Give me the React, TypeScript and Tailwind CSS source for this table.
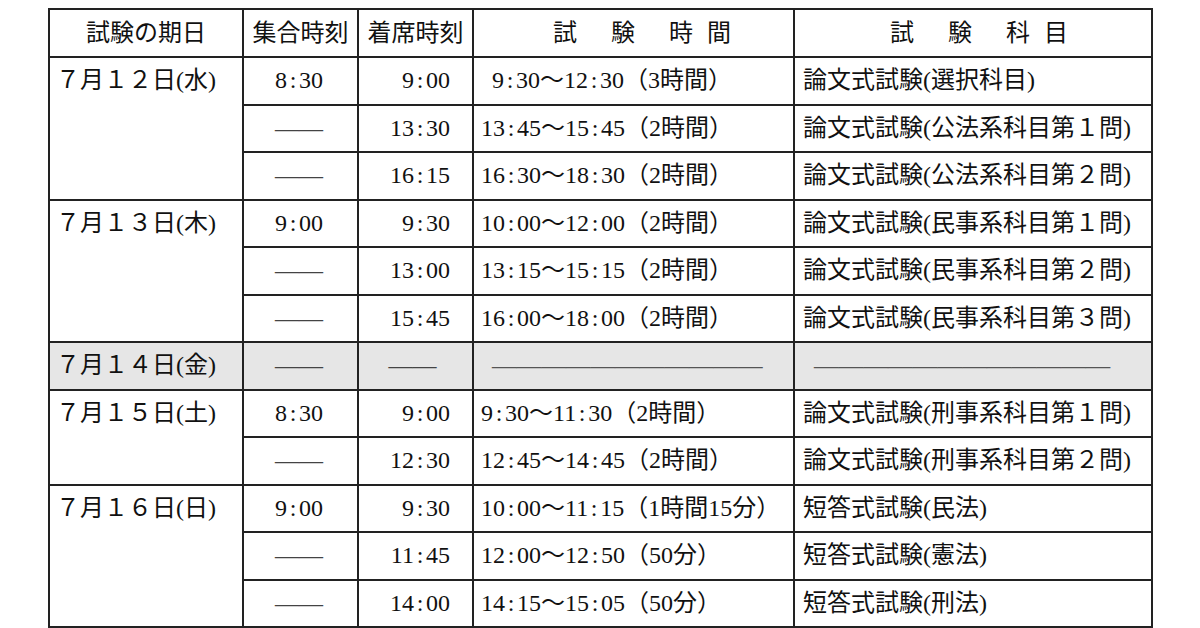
import React from "react";

type Row = {
  gather: string;
  seat: string;
  time: string;
  subject: string;
  indent?: boolean;
};

type Group = { date: string; rows: Row[]; gray?: boolean };

const groups: Group[] = [
  {
    date: "７月１２日(水)",
    rows: [
      { gather: "8:30", seat: "9:00", time: "9:30～12:30（3時間）", subject: "論文式試験(選択科目)", indent: true },
      { gather: "——", seat: "13:30", time: "13:45～15:45（2時間）", subject: "論文式試験(公法系科目第１問)" },
      { gather: "——", seat: "16:15", time: "16:30～18:30（2時間）", subject: "論文式試験(公法系科目第２問)" },
    ],
  },
  {
    date: "７月１３日(木)",
    rows: [
      { gather: "9:00", seat: "9:30", time: "10:00～12:00（2時間）", subject: "論文式試験(民事系科目第１問)" },
      { gather: "——", seat: "13:00", time: "13:15～15:15（2時間）", subject: "論文式試験(民事系科目第２問)" },
      { gather: "——", seat: "15:45", time: "16:00～18:00（2時間）", subject: "論文式試験(民事系科目第３問)" },
    ],
  },
  {
    date: "７月１４日(金)",
    gray: true,
    rows: [],
  },
  {
    date: "７月１５日(土)",
    rows: [
      { gather: "8:30", seat: "9:00", time: "9:30～11:30（2時間）", subject: "論文式試験(刑事系科目第１問)" },
      { gather: "——", seat: "12:30", time: "12:45～14:45（2時間）", subject: "論文式試験(刑事系科目第２問)" },
    ],
  },
  {
    date: "７月１６日(日)",
    rows: [
      { gather: "9:00", seat: "9:30", time: "10:00～11:15（1時間15分）", subject: "短答式試験(民法)" },
      { gather: "——", seat: "11:45", time: "12:00～12:50（50分）", subject: "短答式試験(憲法)" },
      { gather: "——", seat: "14:00", time: "14:15～15:05（50分）", subject: "短答式試験(刑法)" },
    ],
  },
];

function withColons(s: string) {
  const parts = s.split(":");
  const out: React.ReactNode[] = [];
  parts.forEach((p, i) => {
    if (i > 0)
      out.push(
        <span key={"c" + i} className="mx-[2.7px]">
          :
        </span>
      );
    out.push(<React.Fragment key={"p" + i}>{p}</React.Fragment>);
  });
  return out;
}

const cell = "border-r-2 border-b-2 border-[#222] flex items-center whitespace-nowrap";

function Dash({ text = "——" }: { text?: string }) {
  return <span className="text-[#444]">{text}</span>;
}

function Spaced({ chars, gaps, pl }: { chars: string[]; gaps: string[]; pl: string }) {
  return (
    <div className={`${cell} ${pl}`}>
      {chars.map((c, i) => (
        <span key={i} className={i > 0 ? gaps[i - 1] : ""}>
          {c}
        </span>
      ))}
    </div>
  );
}

export default function App() {
  const groupSpan = (n: number) =>
    n === 3 ? "row-span-3" : n === 2 ? "row-span-2" : "row-span-1";

  return (
    <div className="min-h-[628px] w-[1200px] bg-white overflow-hidden">
      <div className="ml-[48px] mt-[8px] w-fit border-t-2 border-l-2 border-[#222] grid grid-cols-[194px_115px_115px_321px_358px] grid-rows-[48px_repeat(12,47.5px)] text-[24px] leading-[1.2] text-[#111] font-['Liberation_Serif','Noto_Sans_CJK_JP',serif]">
        {/* header */}
        <div className={`${cell} justify-center`}>試験の期日</div>
        <div className={`${cell} justify-center`}>集合時刻</div>
        <div className={`${cell} justify-center`}>着席時刻</div>
        <Spaced chars={["試", "験", "時", "間"]} gaps={["ml-[34px]", "ml-[34px]", "ml-[14px]"]} pl="pl-[79px]" />
        <Spaced chars={["試", "験", "科", "目"]} gaps={["ml-[34px]", "ml-[34px]", "ml-[14px]"]} pl="pl-[95px]" />

        {groups.map((g, gi) => {
          if (g.gray) {
            return (
              <React.Fragment key={gi}>
                <div className={`${cell} bg-[#e6e6e6] pl-[6px]`}>{g.date}</div>
                <div className={`${cell} bg-[#e6e6e6] justify-center pr-[3px]`}>
                  <Dash />
                </div>
                <div className={`${cell} bg-[#e6e6e6] justify-center pr-[6px]`}>
                  <Dash />
                </div>
                <div className={`${cell} bg-[#e6e6e6] pl-[18px]`}>
                  <span className="text-[24.6px] text-[#555]">———————————</span>
                </div>
                <div className={`${cell} bg-[#e6e6e6] pl-[19px]`}>
                  <span className="text-[24.7px] text-[#555]">————————————</span>
                </div>
              </React.Fragment>
            );
          }
          return (
            <React.Fragment key={gi}>
              <div className={`border-r-2 border-b-2 border-[#222] ${groupSpan(g.rows.length)}`}>
                <div className="h-[45.5px] flex items-center pl-[6px] whitespace-nowrap">{g.date}</div>
              </div>
              {g.rows.map((r, ri) => (
                <React.Fragment key={ri}>
                  <div className={`${cell} justify-center pr-[3px] ${ri > 0 ? "col-start-2" : ""}`}>
                    {r.gather === "——" ? <Dash /> : withColons(r.gather)}
                  </div>
                  <div className={`${cell} justify-end pr-[22px]`}>{withColons(r.seat)}</div>
                  <div className={`${cell} ${r.indent ? "pl-[18px]" : "pl-[7px]"}`}>{withColons(r.time)}</div>
                  <div className={`${cell} pl-[8px]`}>{r.subject}</div>
                </React.Fragment>
              ))}
            </React.Fragment>
          );
        })}
      </div>
    </div>
  );
}
